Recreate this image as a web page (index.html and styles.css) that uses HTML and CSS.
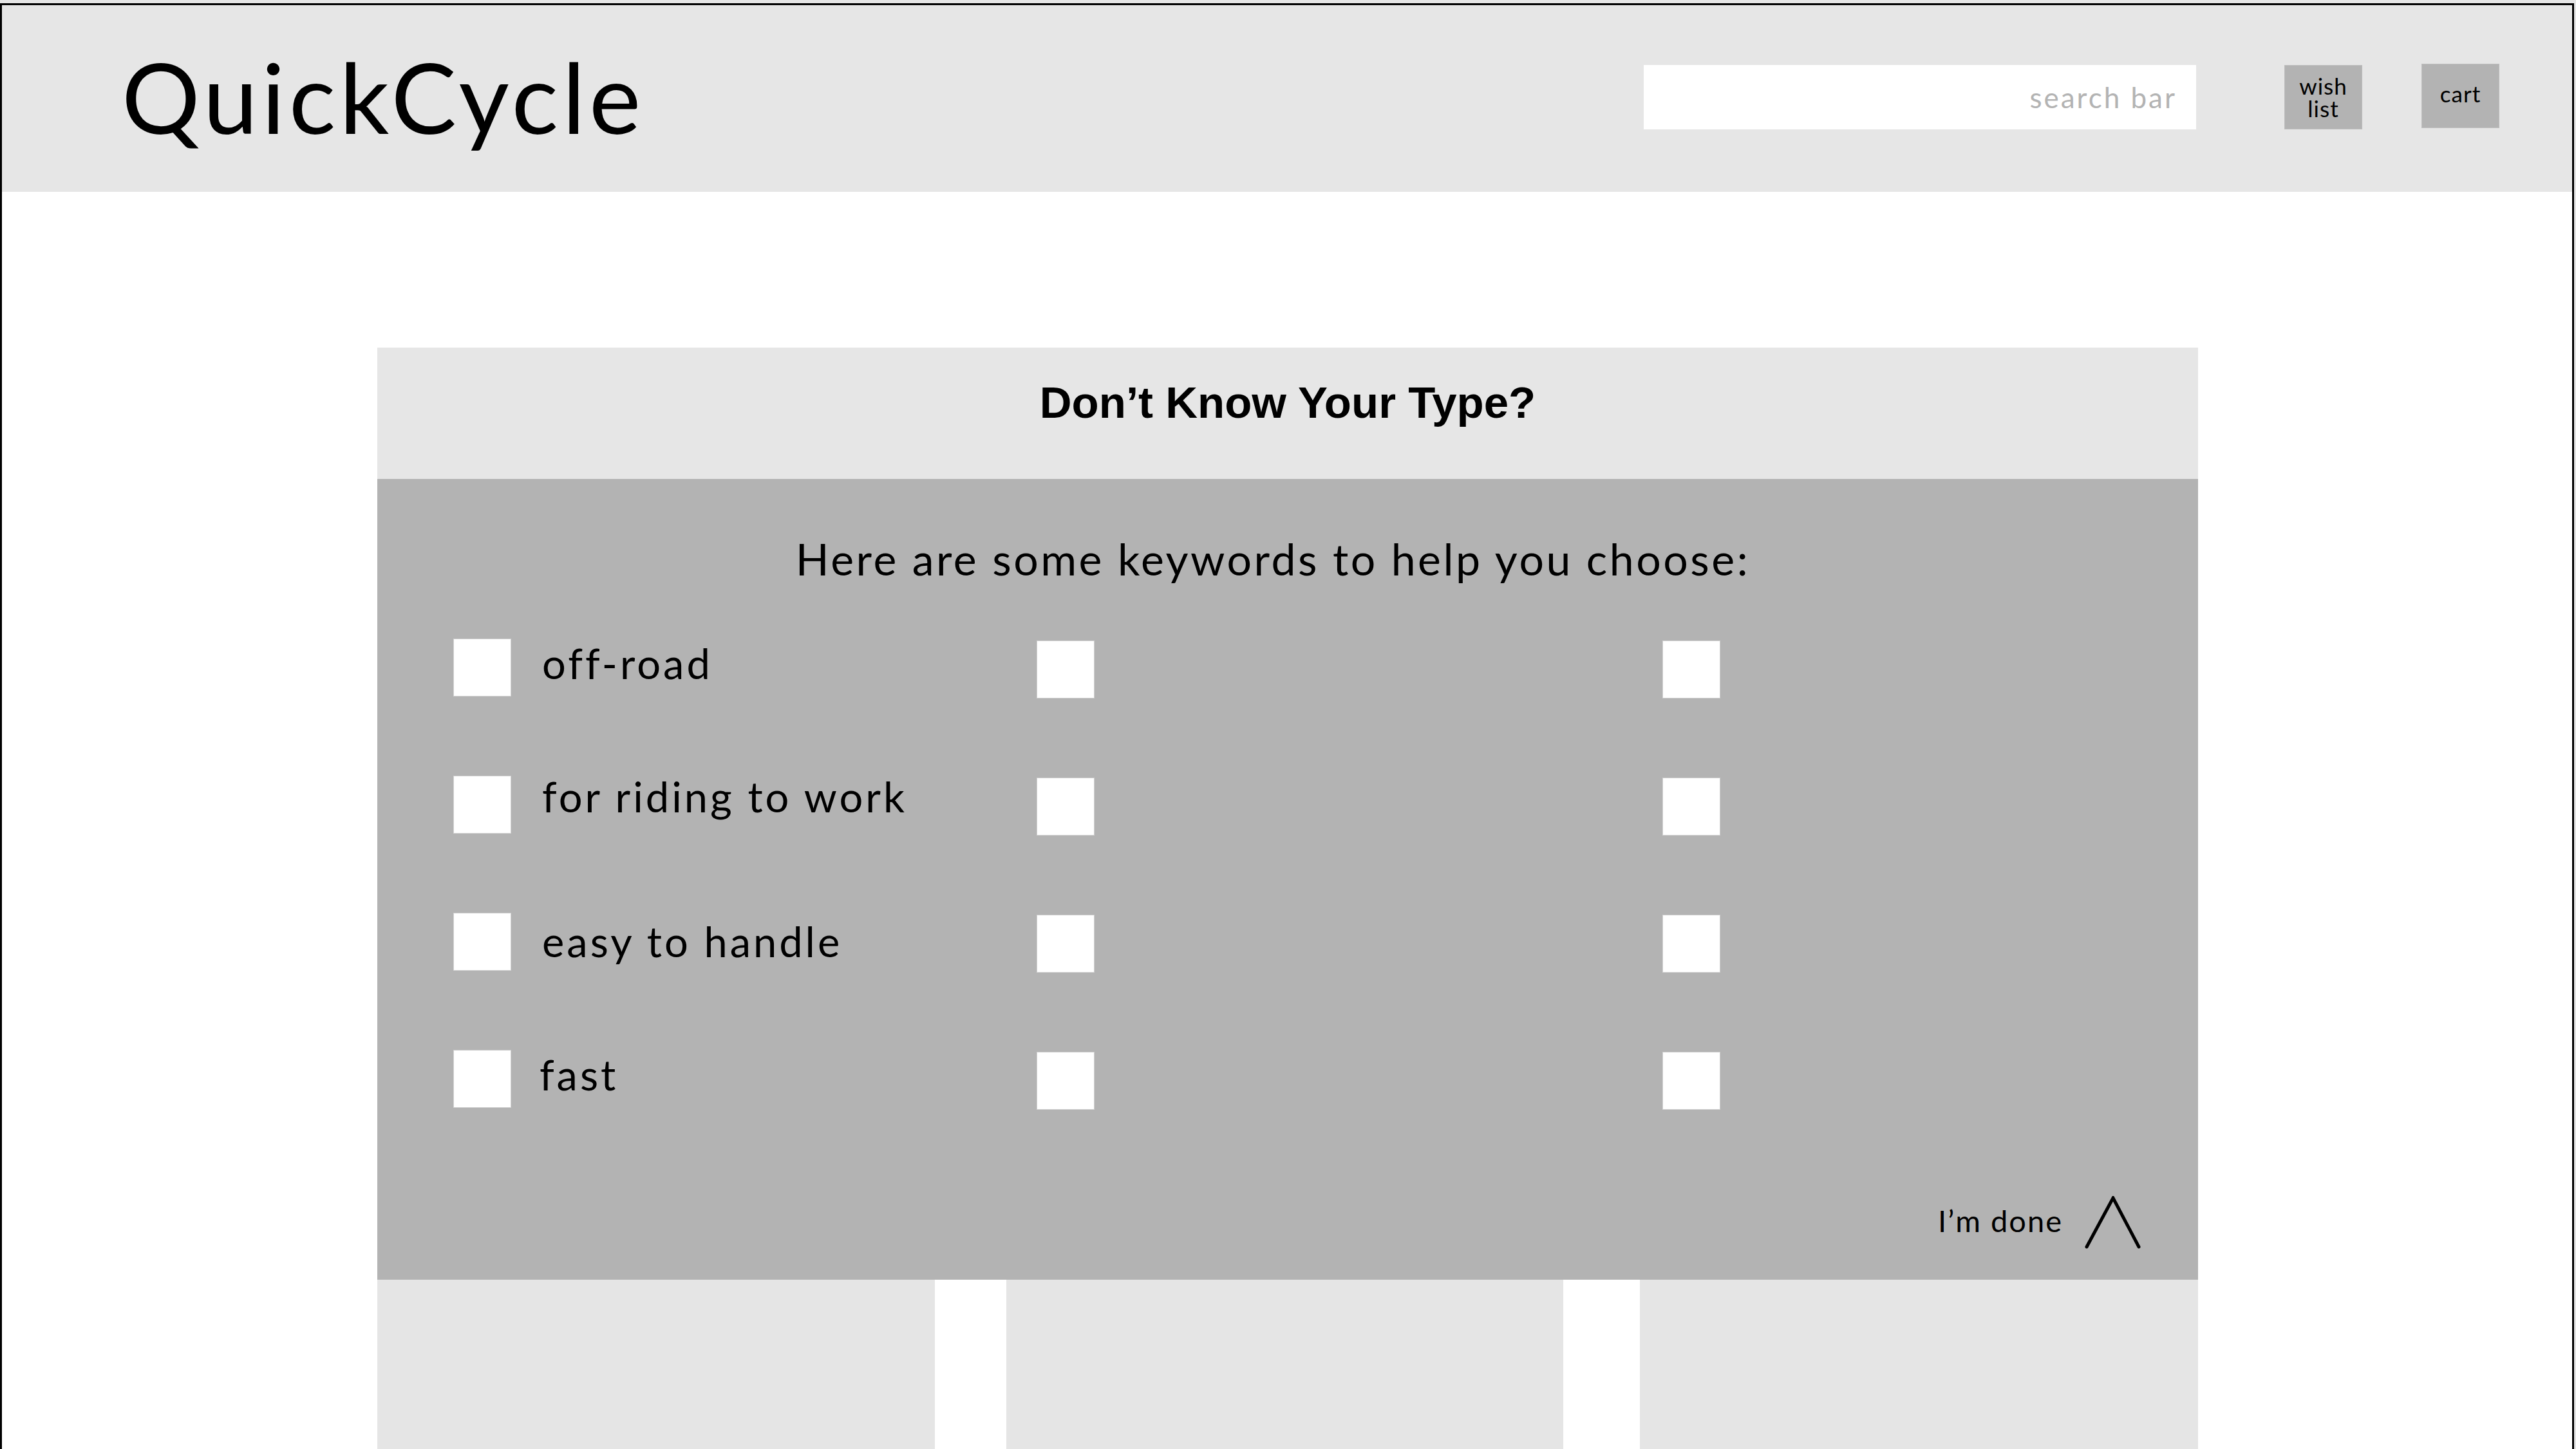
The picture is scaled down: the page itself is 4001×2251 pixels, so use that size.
FILE: index.html
```html
<!DOCTYPE html>
<html lang="en">
<head>
<meta charset="utf-8">
<title>QuickCycle</title>
<link rel="stylesheet" href="styles.css">
</head>
<body>
<div class="frame">
  <header class="topbar">
    <div class="logo">QuickCycle</div>
    <div class="search">search bar</div>
    <div class="btn wish"><span class="line">wish</span><span class="line">list</span></div>
    <div class="btn cart"><span class="line">cart</span></div>
  </header>
  <main class="main">
    <section class="panel">
      <div class="panel-title">Don’t Know Your Type?</div>
      <div class="panel-body">
        <div class="subtitle">Here are some keywords to help you choose:</div>
        <div class="options">
          <div class="opt"><span class="box"></span><span class="label">off-road</span></div>
          <div class="opt c2"><span class="box"></span></div>
          <div class="opt c3"><span class="box"></span></div>
          <div class="opt"><span class="box"></span><span class="label up">for riding to work</span></div>
          <div class="opt c2"><span class="box"></span></div>
          <div class="opt c3"><span class="box"></span></div>
          <div class="opt"><span class="box"></span><span class="label down">easy to handle</span></div>
          <div class="opt c2"><span class="box"></span></div>
          <div class="opt c3"><span class="box"></span></div>
          <div class="opt"><span class="box"></span><span class="label tight">fast</span></div>
          <div class="opt c2"><span class="box"></span></div>
          <div class="opt c3"><span class="box"></span></div>
        </div>
        <div class="done">
          <span class="done-text">I’m done</span>
          <svg class="chev" width="88" height="82" viewBox="0 0 88 82"><polyline points="3,79 44,3 84,79" fill="none" stroke="#000" stroke-width="5" stroke-linecap="round" stroke-linejoin="miter"/></svg>
        </div>
      </div>
    </section>
    <div class="cards">
      <div class="card c-first"></div>
      <div class="card c-mid"></div>
      <div class="card c-last"></div>
    </div>
  </main>
</div>
</body>
</html>
```
FILE: styles.css
```css
html, body {
  margin: 0;
  padding: 0;
}
body {
  background: #e6e6e6;
  width: 4001px;
  height: 2251px;
  overflow: hidden;
  font-family: Lato, "Open Sans", sans-serif;
  color: #000;
}
.frame {
  margin: 5px 3px 0 0;
  border: 3px solid #000;
  border-bottom: none;
  background: #fff;
  height: 2300px;
}
.topbar {
  height: 290px;
  background: #e6e6e6;
  display: flex;
  align-items: flex-start;
  padding: 0 113px 0 186px;
  box-sizing: border-box;
}
.logo {
  font-size: 152px;
  letter-spacing: 6px;
  line-height: 1;
  margin-top: 65px;
  white-space: nowrap;
}
.search {
  margin-left: auto;
  margin-top: 93px;
  width: 858px;
  height: 100px;
  background: #fff;
  box-sizing: border-box;
  padding-right: 30px;
  text-align: right;
  font-size: 44px;
  letter-spacing: 3px;
  line-height: 100px;
  color: #b3b3b3;
}
.btn {
  width: 121px;
  height: 100px;
  background: #b3b3b3;
  box-sizing: border-box;
  border: 1px solid #bdbdbd;
  display: flex;
  flex-direction: column;
  align-items: center;
  justify-content: center;
  text-align: center;
  font-size: 35px;
  letter-spacing: 1px;
}
.line {
  display: block;
  line-height: 35px;
  height: 35px;
}
.wish {
  margin-left: 137px;
  margin-top: 93px;
}
.cart {
  margin-left: 92px;
  margin-top: 91px;
  padding-bottom: 8px;
}
.main {
  padding: 242px 0 0 583px;
}
.panel {
  width: 2828px;
}
.panel-title {
  height: 204px;
  background: #e6e6e6;
  box-sizing: border-box;
  padding-top: 51px;
  text-align: center;
  font-family: "Liberation Sans", Arial, sans-serif;
  font-weight: bold;
  font-size: 69px;
  line-height: 1;
}
.panel-body {
  height: 1244px;
  background: #b3b3b3;
  box-sizing: border-box;
  padding-top: 90px;
  display: flex;
  flex-direction: column;
}
.subtitle {
  text-align: center;
  font-size: 68px;
  letter-spacing: 3.5px;
  line-height: 1;
  padding-right: 46px;
}
.options {
  margin-top: 90px;
  padding-left: 118px;
  display: grid;
  grid-template-columns: 906px 972px 400px;
  row-gap: 123px;
}
.opt {
  display: flex;
  align-items: flex-start;
  height: 90px;
}
.box {
  width: 90px;
  height: 90px;
  background: #fff;
  box-sizing: border-box;
  border: 1px solid #d0d0d0;
  flex: none;
}
.c2 .box, .c3 .box {
  margin-top: 3px;
}
.label {
  margin-left: 48px;
  margin-top: 6px;
  font-size: 65px;
  letter-spacing: 4px;
  line-height: 1;
  white-space: nowrap;
}
.label.up { margin-top: 0; }
.label.down { margin-top: 12px; }
.label.tight { margin-left: 44px; }
.done {
  margin-top: auto;
  margin-bottom: 48px;
  display: flex;
  justify-content: flex-end;
  align-items: flex-start;
  padding-right: 88px;
}
.done-text {
  font-size: 47px;
  letter-spacing: 2px;
  line-height: 1;
  margin-top: 15px;
  margin-right: 34px;
}
.chev {
  display: block;
}
.cards {
  width: 2828px;
  display: flex;
}
.card {
  height: 300px;
  background: #e5e5e5;
}
.c-first { width: 866px; }
.c-mid { width: 865px; margin: 0 119px 0 111px; }
.c-last { width: 867px; }
```
